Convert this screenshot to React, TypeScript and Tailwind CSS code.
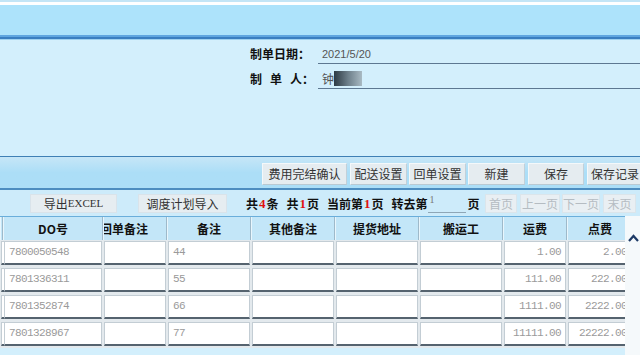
import React from "react";

const cols = [
  { w: 3, title: "", align: "left" },
  { w: 100, title: "DO号", align: "left" },
  { w: 64, title: "回单备注", align: "left" },
  { w: 84, title: "备注", align: "left" },
  { w: 84, title: "其他备注", align: "left" },
  { w: 84, title: "提货地址", align: "left" },
  { w: 84, title: "搬运工", align: "left" },
  { w: 64, title: "运费", align: "right" },
  { w: 66, title: "点费", align: "right" },
];

const rows = [
  ["", "7800050548", "", "44", "", "", "", "1.00", "2.00"],
  ["", "7801336311", "", "55", "", "", "", "111.00", "222.00"],
  ["", "7801352874", "", "66", "", "", "", "1111.00", "2222.00"],
  ["", "7801328967", "", "77", "", "", "", "11111.00", "22222.00"],
];

function TopBtn({ w, ml, children }: { w: number; ml: number; children: React.ReactNode }) {
  return (
    <div
      style={{ width: w, marginLeft: ml }}
      className="h-[22px] shrink-0 flex items-center justify-center bg-[#e5ecf0] border border-t-[#f4f8fa] border-l-[#f4f8fa] border-r-[#c2d0d9] border-b-[#b9c9d3] text-[12px] text-[#333] leading-none"
    >
      {children}
    </div>
  );
}

function PageBtn({ w, ml, children }: { w: number; ml: number; children: React.ReactNode }) {
  return (
    <div
      style={{ width: w, marginLeft: ml }}
      className="h-[19px] shrink-0 flex items-center justify-center bg-[#e9eff3] border border-[#dbe5eb] text-[12px] text-[#b5bcc2] leading-none"
    >
      {children}
    </div>
  );
}

function Red({ children }: { children: React.ReactNode }) {
  return <span className="text-[#e01010] font-['Liberation_Serif',serif] text-[13px] px-[1px]">{children}</span>;
}

export default function App() {
  return (
    <div className="relative w-[640px] h-[355px] overflow-hidden bg-[#d3effc] font-['Noto_Sans_CJK_SC',sans-serif] text-[12px] text-[#222]">
      {/* top band */}
      <div className="h-[2px] bg-[#c3e5f6]" />
      <div className="h-[3px] bg-white" />
      <div className="h-[30px] bg-[#ade3fb]" />
      <div className="h-[2px] bg-[#5fa6e0]" />
      <div className="h-[2px] bg-[#3a7fc0]" />
      <div className="h-[1px] bg-[#9fd2f0]" />

      {/* form panel */}
      <div className="h-[116px] pl-[250px] pt-[4px] flex flex-col gap-[5px]">
        <div className="flex h-[20px]">
          <div className="w-[68px] font-bold leading-[20px] text-[#111]">制单日期：</div>
          <div className="flex-1 h-[20px] border-b border-[#5d7891] pl-[4px] leading-[20px] text-[11px] text-[#555] font-['Liberation_Sans',sans-serif]">
            2021/5/20
          </div>
        </div>
        <div className="flex h-[20px]">
          <div className="w-[68px] font-bold leading-[20px] text-[#111] flex">
            <span className="w-[20px]">制</span>
            <span className="w-[20px]">单</span>
            <span className="w-[10px]">人</span>
            <span className="ml-[2px]">：</span>
          </div>
          <div className="flex-1 h-[20px] border-b border-[#5d7891] pl-[4px] flex items-center text-[12px] text-[#555]">
            <span>钟</span>
            <span className="inline-block w-[28px] h-[15px] bg-gradient-to-r from-[#2e3b45] via-[#6d7f8a] to-[#a9bac3]" />
          </div>
        </div>
      </div>

      {/* button bar */}
      <div className="h-[1px] bg-[#3f80b5]" />
      <div className="h-[31px] bg-gradient-to-b from-[#c6e6f7] via-[#acdef7] to-[#acdef7] flex items-start pt-[6px]">
        <TopBtn w={85} ml={262}>费用完结确认</TopBtn>
        <TopBtn w={57} ml={3}>配送设置</TopBtn>
        <TopBtn w={57} ml={2}>回单设置</TopBtn>
        <TopBtn w={57} ml={2}>新建</TopBtn>
        <TopBtn w={56} ml={3}>保存</TopBtn>
        <TopBtn w={56} ml={3}>保存记录</TopBtn>
      </div>
      <div className="h-[2px] bg-[#4d8dc0]" />

      {/* paging toolbar */}
      <div className="h-[26px] bg-[#cdebfa] flex items-start pt-[4px]">
        <div className="ml-[30px] w-[87px] h-[19px] shrink-0 flex items-center justify-center bg-[#e6edf1] border border-[#d9e3ea] text-[12px] text-[#333] leading-none">
          导出<span className="font-['Liberation_Serif',serif] text-[11px]">EXCEL</span>
        </div>
        <div className="ml-[21px] w-[89px] h-[19px] shrink-0 flex items-center justify-center bg-[#e6edf1] border border-[#d9e3ea] text-[12px] text-[#333] leading-none">
          调度计划导入
        </div>
        <div className="ml-[19px] w-[238px] shrink-0 h-[19px] flex items-center font-bold text-[12px] text-[#111] whitespace-nowrap leading-none">
          <span>共</span>
          <Red>4</Red>
          <span>条</span>
          <span className="ml-[8px]">共</span>
          <Red>1</Red>
          <span>页</span>
          <span className="ml-[8px]">当前第</span>
          <Red>1</Red>
          <span>页</span>
          <span className="ml-[8px]">转去第</span>
          <span className="inline-flex items-start w-[38px] h-[19px] border-b border-[#8ea6b6] font-normal text-[10px] text-[#777] pl-[2px] pt-[1px] font-['Liberation_Serif',serif]">
            1
          </span>
          <span className="ml-[2px]">页</span>
        </div>
        <PageBtn w={32} ml={1}>首页</PageBtn>
        <PageBtn w={40} ml={3}>上一页</PageBtn>
        <PageBtn w={38} ml={2}>下一页</PageBtn>
        <PageBtn w={33} ml={3}>末页</PageBtn>
      </div>

      {/* table */}
      <div className="flex">
        <div className="w-[625px] overflow-hidden">
          <div className="w-[700px]">
            <div className="h-[1px] bg-[#6aaedb]" />
            <div className="flex h-[23px] bg-[#c3e6f8]">
              {cols.map((c, i) => (
                <div
                  key={i}
                  style={{ width: c.w }}
                  className={
                    "shrink-0 h-full flex items-center overflow-hidden font-bold text-[12px] text-[#111] border-r border-[#9eb9ca] border-l border-l-[#e8f6fd] " +
                    (i === 2 ? "justify-start" : "justify-center")
                  }
                >
                  {i === 0 ? (
                    <div className="ml-[1px] w-[1px] h-[12px] bg-[#222]" />
                  ) : i === 2 ? (
                    <span className="-ml-[4px] whitespace-nowrap">{c.title}</span>
                  ) : (
                    <span className="whitespace-nowrap">{c.title}</span>
                  )}
                </div>
              ))}
            </div>
            {rows.map((r, ri) => (
              <div key={ri} className="flex h-[27px] bg-[#e3e9ed]">
                {cols.map((c, ci) => (
                  <div key={ci} style={{ width: c.w }} className="shrink-0 h-full pt-[1px] pb-[2px] px-[1px]">
                    <div
                      className={
                        "h-full bg-white border border-[#c3cdd4] border-b-2 border-b-[#55636f] flex items-center overflow-hidden whitespace-nowrap font-['Liberation_Mono',monospace] text-[11px] tracking-[-0.6px] text-[#9a9a9a] " +
                        (c.align === "right" ? "justify-end pr-[4px]" : "justify-start pl-[4px]")
                      }
                    >
                      {r[ci]}
                    </div>
                  </div>
                ))}
              </div>
            ))}
          </div>
        </div>
        <div className="w-[15px] h-[140px] bg-[#f5f9fb] relative">
          <svg className="absolute left-[3px] top-[18px]" width="11" height="8" viewBox="0 0 11 8">
            <polyline points="1,7 5.5,2 10,7" fill="none" stroke="#1d3a66" strokeWidth="2.2" />
          </svg>
        </div>
      </div>
    </div>
  );
}
